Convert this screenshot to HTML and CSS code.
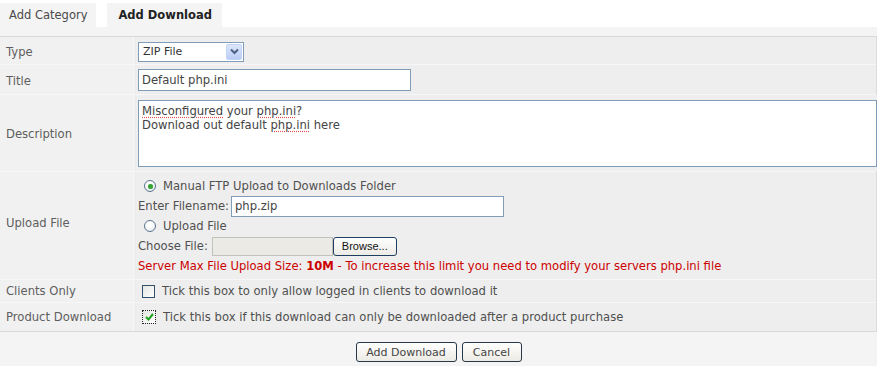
FILE: index.html
```html
<!DOCTYPE html>
<html>
<head>
<meta charset="utf-8">
<link rel="stylesheet" href="styles.css">
</head>
<body>
<div class="tabs">
  <div class="tab">Add Category</div>
  <div class="tab active">Add Download</div>
</div>
<div class="panel">
  <div class="form">
    <div class="row r-type">
      <div class="label">Type</div>
      <div class="field">
        <span class="select"><span class="select-text">ZIP File</span><span class="select-btn"><svg width="9" height="7" viewBox="0 0 9 7"><path d="M1 1.5 L4.5 5 L8 1.5" fill="none" stroke="#4d6185" stroke-width="2"/></svg></span></span>
      </div>
    </div>
    <div class="row r-title">
      <div class="label">Title</div>
      <div class="field"><span class="input title-input">Default php.ini</span></div>
    </div>
    <div class="row r-desc">
      <div class="label">Description</div>
      <div class="field">
        <div class="textarea"><span class="spell">Misconfigured</span> your <span class="spell">php.ini</span>?<br>Download out default <span class="spell">php.ini</span> here</div>
      </div>
    </div>
    <div class="row r-upload">
      <div class="label">Upload File</div>
      <div class="field upload">
        <div class="line radio-line"><span class="radio checked"></span><span>Manual FTP Upload to Downloads Folder</span></div>
        <div class="line"><span>Enter Filename:</span><span class="input filename-input">php.zip</span></div>
        <div class="line radio-line"><span class="radio"></span><span>Upload File</span></div>
        <div class="line"><span>Choose File:</span><span class="file-box"></span><span class="browse">Browse...</span></div>
        <p class="warn">Server Max File Upload Size: <b>10M</b> - To increase this limit you need to modify your servers php.ini file</p>
      </div>
    </div>
    <div class="row r-clients">
      <div class="label">Clients Only</div>
      <div class="field check-line"><span class="checkbox"></span><span>Tick this box to only allow logged in clients to download it</span></div>
    </div>
    <div class="row r-product">
      <div class="label">Product Download</div>
      <div class="field check-line"><span class="checkbox checked"><svg width="9" height="8" viewBox="0 0 9 8"><path d="M1 4 L3.5 6.5 L8 1" fill="none" stroke="#21a121" stroke-width="2"/></svg></span><span>Tick this box if this download can only be downloaded after a product purchase</span></div>
    </div>
  </div>
  <div class="actions">
    <span class="btn btn-add">Add Download</span>
    <span class="btn btn-cancel">Cancel</span>
  </div>
</div>
</body>
</html>
```
FILE: styles.css
```css
* { box-sizing: border-box; }
html, body { margin: 0; padding: 0; background: #ffffff; }
body {
  font-family: "DejaVu Sans", Verdana, sans-serif;
  font-size: 11.6px;
  color: #5a5a5a;
  width: 880px;
  height: 366px;
  overflow: hidden;
}
.tabs {
  display: flex;
  gap: 11px;
  height: 27px;
  padding-top: 3px;
}
.tab {
  background: #f4f4f4;
  color: #4a4a4a;
  padding: 0 9px;
  line-height: 24px;
  font-size: 11.5px;
}
.tab.active {
  font-weight: bold;
  color: #222222;
  padding: 0 10px 0 11px;
}
.panel {
  width: 877px;
  background: #f4f4f4;
  padding-top: 9px;
}
.form {
  border-top: 1px solid #d8d8d8;
  border-bottom: 1px solid #d8d8d8;
  border-right: 1px solid #dcdcdc;
  background: #f7f7f7;
  display: flex;
  flex-direction: column;
  gap: 1px;
}
.row {
  display: grid;
  grid-template-columns: 133px 1fr;
  column-gap: 1px;
}
.label {
  background: #f1f1f1;
  display: flex;
  align-items: center;
  padding-left: 6px;
  padding-top: 2px;
  color: #5e5e5e;
}
.field {
  background: #eeeeee;
  padding-left: 4px;
  color: #505050;
  display: flex;
  align-items: center;
}
.r-type { height: 27px; }
.r-title { height: 29px; }
.r-desc { height: 76px; }
.r-upload { height: 107px; }
.r-upload .label { padding-top: 0; padding-bottom: 6px; }
.r-clients { height: 22px; }
.r-product { height: 28px; }
.r-clients .label, .r-product .label { padding-top: 0; padding-bottom: 1px; }

.select {
  display: flex;
  align-items: center;
  width: 106px;
  height: 20px;
  border: 1px solid #7f9db9;
  background: #ffffff;
  padding: 1px;
  margin-top: 2px;
  font-size: 11px;
}
.select-text { flex: 1; padding-left: 3px; color: #333333; }
.select-btn {
  width: 16px;
  height: 16px;
  background: linear-gradient(#dce6fb, #b9cdf6);
  border: 1px solid #c3d3f5;
  border-radius: 2px;
  display: flex;
  align-items: center;
  justify-content: center;
}
.input {
  display: flex;
  align-items: center;
  border: 1px solid #7f9db9;
  background: #ffffff;
  color: #444444;
  padding-left: 3px;
}
.title-input { width: 273px; height: 22px; margin-top: 1px; }
.textarea {
  width: 739px;
  height: 67px;
  border: 1px solid #7f9db9;
  background: #ffffff;
  padding: 3px 3px;
  line-height: 14px;
  color: #444444;
  margin-top: 1px;
}
.spell { text-decoration: underline dotted #e05050; text-underline-offset: 2px; }

.field.upload {
  flex-direction: column;
  align-items: flex-start;
  justify-content: flex-start;
  padding-top: 4px;
}
.line {
  height: 20px;
  display: flex;
  align-items: center;
  white-space: nowrap;
}
.radio-line { padding-left: 6px; gap: 7px; }
.radio {
  width: 12px;
  height: 12px;
  border-radius: 50%;
  border: 1px solid #5a7590;
  background: radial-gradient(circle at 40% 35%, #ffffff 30%, #dfe3e8 100%);
  display: flex;
  align-items: center;
  justify-content: center;
}
.radio.checked::after {
  content: "";
  width: 5px;
  height: 5px;
  border-radius: 50%;
  background: #37a337;
  box-shadow: 0 0 1px #7fd07f;
}
.filename-input { width: 273px; height: 21px; margin-left: 2px; }
.file-box {
  width: 121px;
  height: 19px;
  margin-left: 4px;
  background: #ebeae4;
  border: 1px solid #c2c2bd;
}
.browse {
  width: 64px;
  height: 19px;
  border: 1px solid #1e3f60;
  border-radius: 3px;
  background: linear-gradient(#ffffff, #ecebe6);
  font-family: "Liberation Sans", Arial, sans-serif;
  font-size: 11px;
  color: #111111;
  display: flex;
  align-items: center;
  justify-content: center;
}
.warn {
  color: #cc0000;
  margin: 0;
  line-height: 20px;
  white-space: nowrap;
}
.warn b { font-weight: bold; }

.check-line { gap: 7px; }
.checkbox {
  width: 13px;
  height: 13px;
  border: 1px solid #32506e;
  background: linear-gradient(135deg, #e4e4e0, #ffffff);
  display: flex;
  align-items: center;
  justify-content: center;
  margin-left: 4px;
}
.checkbox.checked {
  border: 1px dotted #222222;
  width: 14px;
  height: 14px;
}

.actions {
  display: flex;
  justify-content: center;
  gap: 5px;
  padding-top: 10px;
  height: 35px;
}
.btn {
  height: 20px;
  border: 1px solid #26384a;
  border-radius: 3px;
  background: linear-gradient(#ffffff, #eceae4);
  color: #444444;
  font-size: 11px;
  display: flex;
  align-items: center;
  justify-content: center;
}
.btn-add { width: 101px; }
.btn-cancel { width: 60px; }
```
